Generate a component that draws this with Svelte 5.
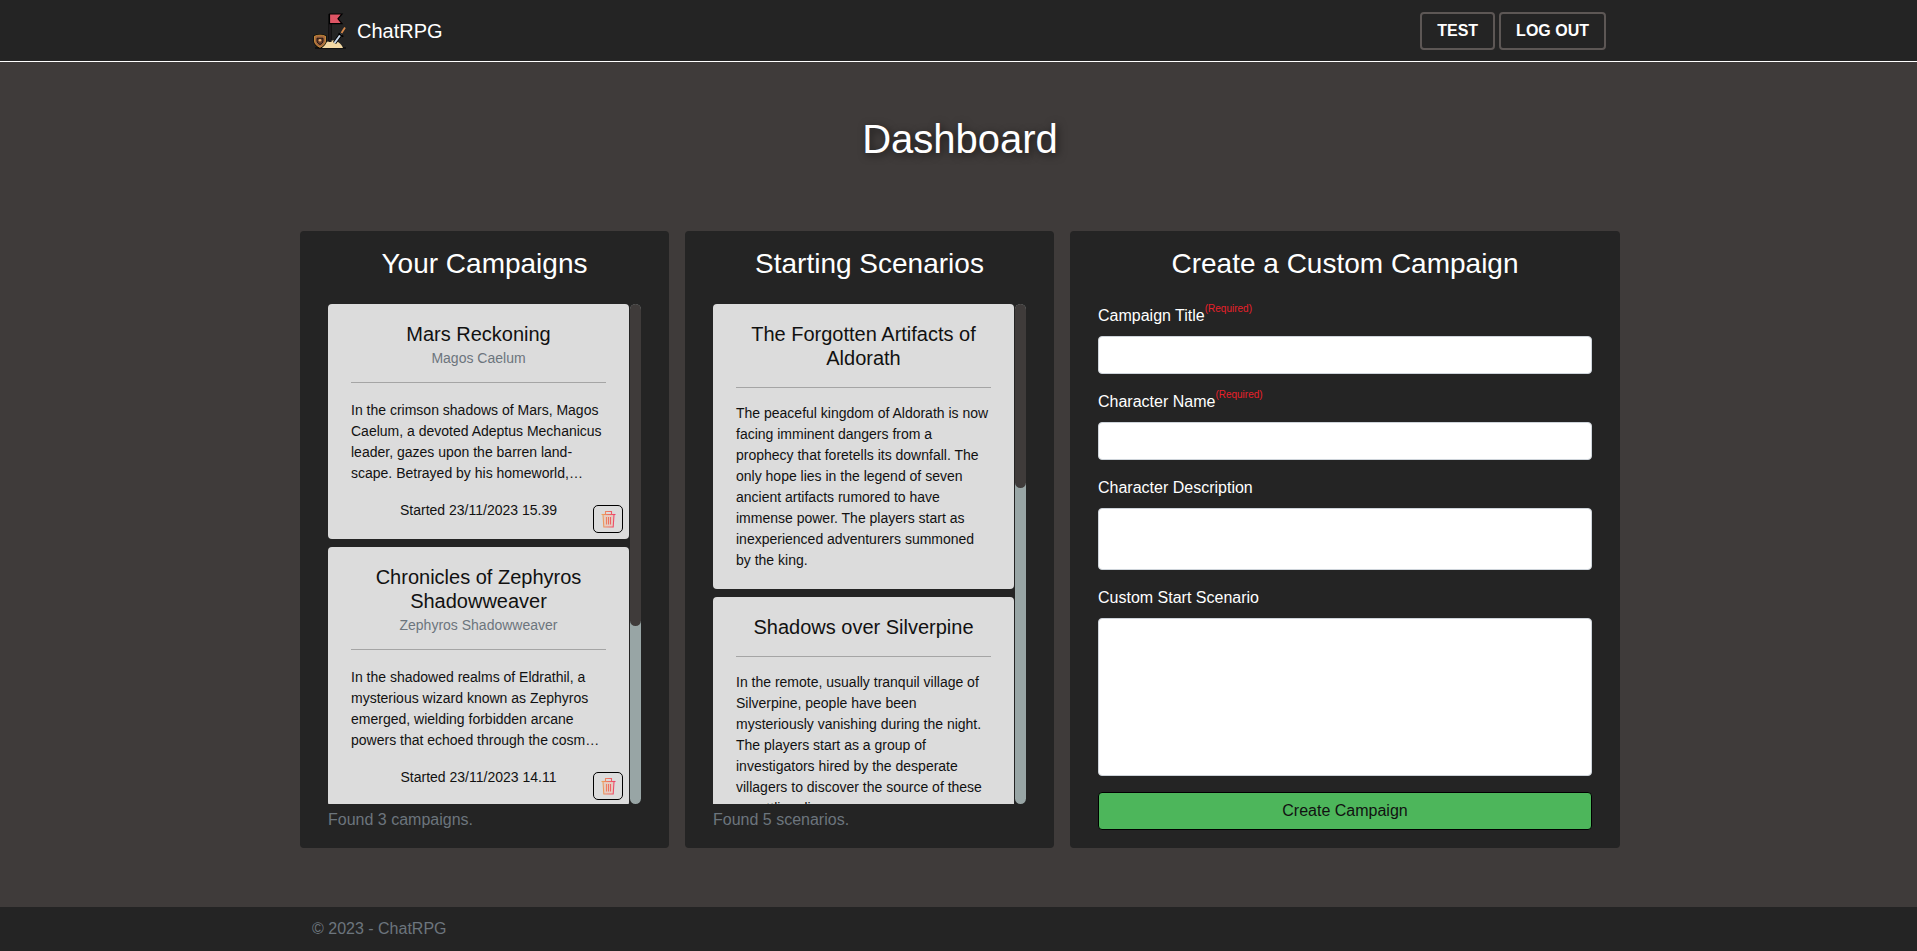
<script lang="ts">
  interface Campaign {
    title: string;
    character: string;
    description: string;
    started: string;
  }

  interface Scenario {
    title: string;
    description: string;
  }

  const listHeight = 500;
  // full height of the scrolled content in each list
  const campaignsContent = 776;
  const scenariosContent = 1359;

  const campaigns: Campaign[] = [
    {
      title: 'Mars Reckoning',
      character: 'Magos Caelum',
      description:
        'In the crimson shadows of Mars, Magos Caelum, a devoted Adeptus Mechanicus leader, gazes upon the barren land-scape. Betrayed by his homeworld, Caelum swears to reclaim the forges that were stolen from his order and to restore the glory of the Omnissiah.',
      started: '23/11/2023 15.39'
    },
    {
      title: 'Chronicles of Zephyros Shadowweaver',
      character: 'Zephyros Shadowweaver',
      description:
        'In the shadowed realms of Eldrathil, a mysterious wizard known as Zephyros emerged, wielding forbidden arcane powers that echoed through the cosmos and shook the foundations of every kingdom that had dared to oppose him.',
      started: '23/11/2023 14.11'
    },
    {
      title: 'The Last Voyage of the Silver Gull',
      character: 'Captain Maren',
      description:
        'Far beyond the charted seas, Captain Maren steers her battered ship toward an island that appears on no map, chasing a rumour of treasure and a debt that she can never repay to the drowned crew of her father.',
      started: '22/11/2023 20.02'
    }
  ];

  const scenarios: Scenario[] = [
    {
      title: 'The Forgotten Artifacts of Aldorath',
      description:
        'The peaceful kingdom of Aldorath is now facing imminent dangers from a prophecy that foretells its downfall. The only hope lies in the legend of seven ancient artifacts rumored to have immense power. The players start as inexperienced adventurers summoned by the king.'
    },
    {
      title: 'Shadows over Silverpine',
      description:
        'In the remote, usually tranquil village of Silverpine, people have been mysteriously vanishing during the night. The players start as a group of investigators hired by the desperate villagers to discover the source of these unsettling disappearances.'
    },
    {
      title: 'The Siege of Ironhold',
      description:
        'The dwarven fortress of Ironhold is surrounded by an endless horde from the northern wastes. Its supplies are dwindling and its walls are failing. The players start as messengers who slip through the enemy lines and must bring back aid before the gates fall at last.'
    },
    {
      title: 'Whispers in the Sunken City',
      description:
        'A great earthquake has raised the ruins of an ancient city from the bay. Strange voices now drift through the harbor every night. The players start as divers hired by the guild to chart the ruins.'
    },
    {
      title: 'The Crown of Embers',
      description:
        'The old queen has died without an heir, and her burning crown has vanished from the vault. Rival houses prepare for war. The players start as royal agents sent to recover the crown in secret.'
    }
  ];

  const fields = [
    { id: 'title', label: 'Campaign Title', required: true, kind: 'input' },
    { id: 'character', label: 'Character Name', required: true, kind: 'input' },
    { id: 'description', label: 'Character Description', required: false, kind: 'short' },
    { id: 'scenario', label: 'Custom Start Scenario', required: false, kind: 'long' }
  ];

  function thumbHeight(content: number) {
    return (listHeight * listHeight) / content;
  }
</script>

<header class="topbar">
  <nav class="topbar-inner">
    <a class="brand" href="#home">
      <svg class="logo" viewBox="0 0 36 36" width="36" height="36" aria-hidden="true">
        <path d="M3 35h31" stroke="#000" stroke-width="1" />
        <path d="M10 35c2-5 6-7.500 10.500-7.500s8.500 2.500 10.500 7.500z" fill="#f3d9a4" />
        <path d="M18 1v28" stroke="#000" stroke-width="3" />
        <path d="M18 1v28" stroke="#3a3238" stroke-width="1" />
        <path d="M17.500 1h12.500l-4 4.800 4 4.800h-12.500z" fill="#de5565" stroke="#000" stroke-width="1.200" />
        <path d="M1.500 22.500c4.200-1.800 8.800-1.800 13 0v5.500c0 3.500-3.200 6-6.500 7.500-3.300-1.500-6.500-4-6.500-7.500z" fill="#000" />
        <path d="M2.500 23.200c3.600-1.400 7.400-1.400 11 0v4.800c0 3-2.700 5.100-5.500 6.400-2.800-1.300-5.500-3.400-5.500-6.400z" fill="#a5683f" stroke="#e0a040" stroke-width=".8" />
        <path d="M5 25.200h6v2.800c0 1.500-1.500 3-3 3.500-1.500-.5-3-2-3-3.500z" fill="#6b3d2a" stroke="#111" stroke-width=".9" />
        <circle cx="8" cy="27.200" r="1.300" fill="#e8b070" />
        <path d="M22.500 30l6.500-9" stroke="#000" stroke-width="3.800" />
        <path d="M22.500 30l6.500-9" stroke="#c8d8ea" stroke-width="2" />
        <path d="M26.500 20.500l4.800 3.200" stroke="#000" stroke-width="1.600" />
        <path d="M29.500 20l3.500-5.500" stroke="#d98a4a" stroke-width="1.800" />
      </svg>
      <span>ChatRPG</span>
    </a>
    <div class="nav-actions">
      <button class="nav-btn">TEST</button>
      <button class="nav-btn">LOG OUT</button>
    </div>
  </nav>
</header>

<main class="page">
  <h1>Dashboard</h1>

  <div class="panels">
    <section class="panel">
      <h2>Your Campaigns</h2>
      <div class="list-wrap">
        <div class="card-list">
          {#each campaigns as campaign}
            <article class="card">
              <h3>{campaign.title}</h3>
              <p class="character">{campaign.character}</p>
              <hr />
              <p class="description clamped">{campaign.description}</p>
              <p class="started">Started {campaign.started}</p>
              <button class="delete" aria-label="Delete campaign">
                <svg viewBox="0 0 15 18" width="15" height="18" fill="none" aria-hidden="true">
                  <defs>
                    <linearGradient id="trash-grad" gradientUnits="userSpaceOnUse" x1="1" y1="0" x2="14" y2="0">
                      <stop offset="0" stop-color="#eda35c" />
                      <stop offset="1" stop-color="#ee3f68" />
                    </linearGradient>
                  </defs>
                  <path d="M2.500 5h10l-.7 12H3.200z" fill="#f2b9a0" opacity=".45" />
                  <g stroke="url(#trash-grad)" stroke-width="1.100">
                    <path d="M.5 4.500h14" />
                    <path d="M4.500 4.500v-3h6v3" />
                    <path d="M2 4.500l.8 12.500h9.400l.8-12.500" />
                    <path d="M5.500 7v7.500M7.500 7v7.500M9.500 7v7.500" />
                  </g>
                </svg>
              </button>
            </article>
          {/each}
        </div>
        <div class="scrollbar">
          <div class="thumb" style="height: {thumbHeight(campaignsContent)}px"></div>
        </div>
      </div>
      <p class="found">Found {campaigns.length} campaigns.</p>
    </section>

    <section class="panel">
      <h2>Starting Scenarios</h2>
      <div class="list-wrap">
        <div class="card-list">
          {#each scenarios as scenario}
            <article class="card">
              <h3>{scenario.title}</h3>
              <hr class="roomy" />
              <p class="description">{scenario.description}</p>
            </article>
          {/each}
        </div>
        <div class="scrollbar">
          <div class="thumb" style="height: {thumbHeight(scenariosContent)}px"></div>
        </div>
      </div>
      <p class="found">Found {scenarios.length} scenarios.</p>
    </section>

    <section class="panel wide">
      <h2>Create a Custom Campaign</h2>
      <form class="create-form" onsubmit={(e) => e.preventDefault()}>
        {#each fields as field}
          <div class="field">
            <label for={field.id}>
              {field.label}{#if field.required}<sup>(Required)</sup>{/if}
            </label>
            {#if field.kind === 'input'}
              <input id={field.id} type="text" />
            {:else}
              <textarea id={field.id} class={field.kind}></textarea>
            {/if}
          </div>
        {/each}
        <button class="create-btn" type="submit">Create Campaign</button>
      </form>
    </section>
  </div>
</main>

<footer class="footer">
  <div class="footer-inner">© 2023 - ChatRPG</div>
</footer>

<style>
  :global(body) {
    margin: 0;
    background: #3f3b3a;
    font-family: 'Liberation Sans', Arial, sans-serif;
    font-size: 16px;
    line-height: 1.5;
    color: #fff;
  }

  .topbar {
    background: #242424;
    border-bottom: 1px solid #fff;
    height: 61px;
  }

  .topbar-inner {
    box-sizing: border-box;
    width: 1320px;
    height: 100%;
    margin-left: 300px;
    padding: 0 14px 0 12px;
    display: flex;
    align-items: center;
    justify-content: space-between;
  }

  .brand {
    display: flex;
    align-items: center;
    gap: 9px;
    color: #fff;
    font-size: 20px;
    text-decoration: none;
  }

  .logo {
    display: block;
  }

  .nav-actions {
    display: flex;
    gap: 4px;
  }

  .nav-btn {
    height: 38px;
    padding: 0 15px;
    background: #242424;
    border: 2px solid #5d5755;
    border-radius: 4px;
    color: #fff;
    font-family: inherit;
    font-size: 16px;
    font-weight: 700;
  }

  .page {
    width: 1320px;
    margin-left: 300px;
    padding-bottom: 59px;
  }

  h1 {
    margin: 0;
    padding: 53px 0 68px;
    font-size: 40px;
    font-weight: 400;
    line-height: 48px;
    text-align: center;
    text-shadow: 2px 2px 8px rgba(0, 0, 0, 0.6);
  }

  .panels {
    display: flex;
    gap: 16px;
  }

  .panel {
    box-sizing: border-box;
    width: 369px;
    height: 617px;
    padding: 16px 28px 0;
    background: #242424;
    border-radius: 4px;
  }

  .panel.wide {
    width: 550px;
  }

  h2 {
    margin: 0 0 23px;
    font-size: 28px;
    font-weight: 400;
    line-height: 34px;
    text-align: center;
  }

  .list-wrap {
    display: flex;
    height: 500px;
  }

  .card-list {
    flex: none;
    width: 301px;
    overflow: hidden;
  }

  .scrollbar {
    flex: none;
    width: 11px;
    margin-left: 1px;
    background: #98a5a5;
    border-radius: 6px;
  }

  .thumb {
    background: #3f3b3a;
    border-radius: 6px;
  }

  .card {
    position: relative;
    margin-bottom: 8px;
    padding: 18px 23px;
    background: #dcdcdc;
    border-radius: 4px;
    color: #111;
  }

  h3 {
    margin: 0;
    font-size: 20px;
    font-weight: 400;
    line-height: 24px;
    text-align: center;
  }

  .character {
    margin: 2px 0 0;
    color: #6c757d;
    font-size: 14px;
    line-height: 21px;
    text-align: center;
  }

  hr {
    margin: 13px 0 17px;
    border: 0;
    border-top: 1px solid #a5a5a5;
  }

  hr.roomy {
    margin: 17px 0 15px;
  }

  .description {
    margin: 0;
    font-size: 14px;
    line-height: 21px;
  }

  .clamped {
    display: -webkit-box;
    -webkit-box-orient: vertical;
    -webkit-line-clamp: 4;
    overflow: hidden;
  }

  .started {
    margin: 16px 0 0;
    font-size: 14px;
    line-height: 21px;
    text-align: center;
  }

  .delete {
    position: absolute;
    right: 6px;
    bottom: 6px;
    display: flex;
    align-items: center;
    justify-content: center;
    box-sizing: border-box;
    width: 30px;
    height: 28px;
    padding: 0;
    background: transparent;
    border: 1px solid #000;
    border-radius: 5px;
  }

  .found {
    margin: 4px 0 0;
    color: #6c757d;
    line-height: 24px;
  }

  .create-form {
    display: flex;
    flex-direction: column;
  }

  .field {
    display: flex;
    flex-direction: column;
    margin-bottom: 16px;
  }

  label {
    margin-bottom: 8px;
    line-height: 24px;
  }

  sup {
    color: #e8202a;
    font-size: 10px;
    line-height: 0;
    vertical-align: 9px;
  }

  input,
  textarea {
    box-sizing: border-box;
    display: block;
    width: 100%;
    padding: 6px 12px;
    background: #fff;
    border: 1px solid #ced4da;
    border-radius: 4px;
    font-family: inherit;
    font-size: 16px;
    resize: none;
  }

  input {
    height: 38px;
  }

  textarea.short {
    height: 62px;
  }

  textarea.long {
    height: 158px;
  }

  .create-btn {
    height: 38px;
    padding: 0;
    background: #4db65b;
    border: 1px solid #000;
    border-radius: 4px;
    color: #111;
    font-family: inherit;
    font-size: 16px;
  }

  .footer {
    height: 44px;
    background: #242424;
    color: #6c757d;
  }

  .footer-inner {
    width: 1320px;
    margin-left: 300px;
    padding-left: 12px;
    line-height: 44px;
  }
</style>
